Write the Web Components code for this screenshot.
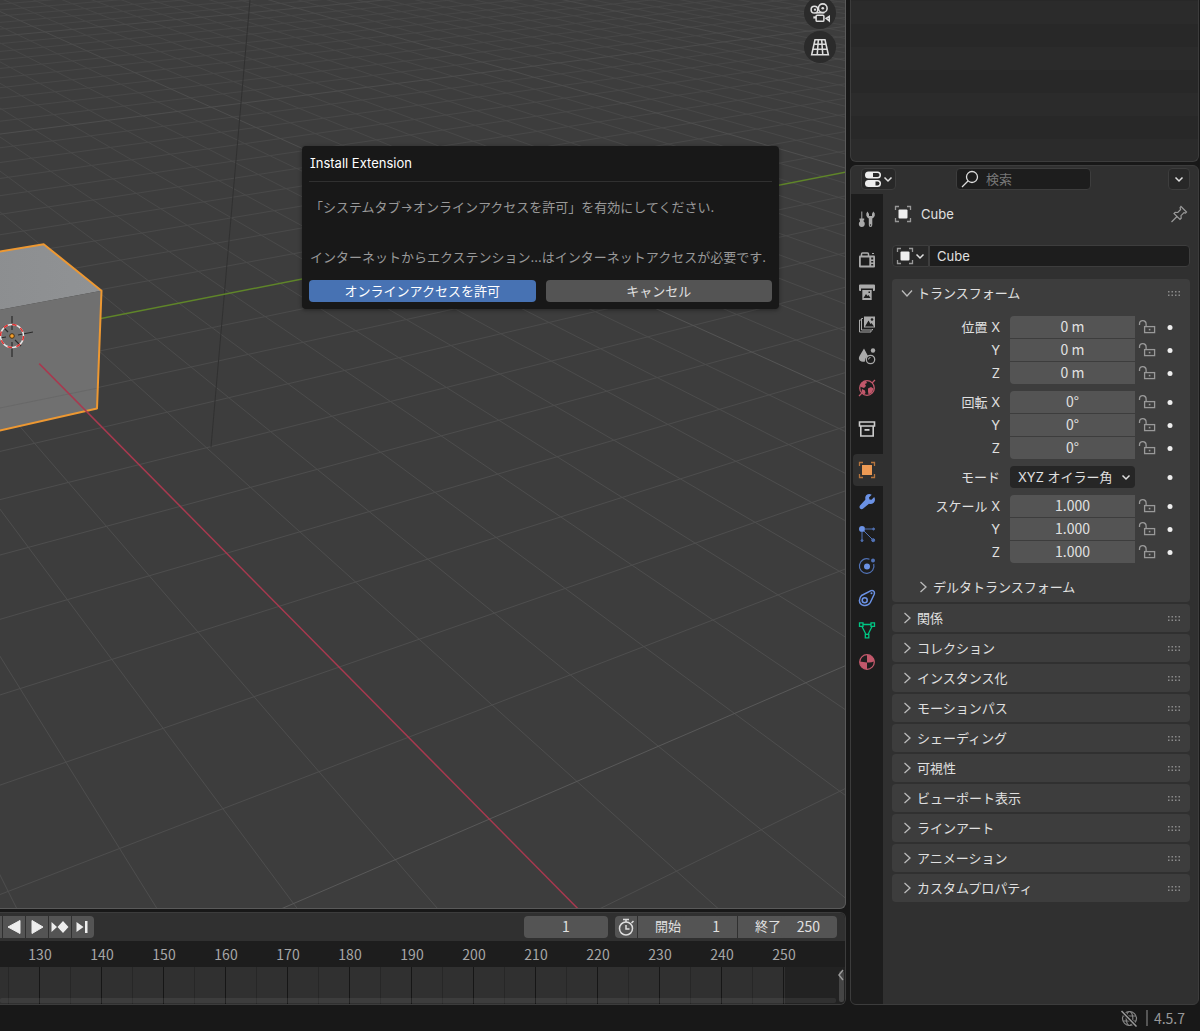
<!DOCTYPE html>
<html lang="ja">
<head>
<meta charset="utf-8">
<title>Install Extension</title>
<style>
    html, body {
        height: 100%;
        margin: 0;
    }
    body {
        --bg: #181818;
        --panel: #303030;
        --box: #3d3d3d;
        --field: #545454;
        --dark: #1d1d1d;
        --text: #e0e0e0;
        --digits: 14px/20px "Noto Sans CJK JP", sans-serif;
        background: var(--bg);
        color: var(--text);
        font: 13px/20px Inter, "Noto Sans CJK JP", sans-serif;
        font-feature-settings: "cv08";
        overflow: hidden;
    }
</style>
</head>
<body>
<bl-app></bl-app>

<script>
const ICONS = {
    down: '<path d="M5.5 7.5 9 11l3.5-3.5" fill="none" stroke="currentColor" stroke-width="1.5"/>',
    open: '<path d="M4 6.5 9 12l5-5.5" fill="none" stroke="currentColor" stroke-width="1.3"/>',
    closed: '<path d="M6.5 4 12 9l-5.5 5" fill="none" stroke="currentColor" stroke-width="1.3"/>',
    left: '<path d="M11 4 7 9l4 5" fill="none" stroke="currentColor" stroke-width="1.5"/>',
    grip: '<path d="M3 7h1.5v1.5H3zM6.5 7H8v1.5H6.5zM10 7h1.5v1.5H10zM13.5 7H15v1.5h-1.5zM3 10.5h1.5V12H3zM6.5 10.5H8V12H6.5zM10 10.5h1.5V12H10zM13.5 10.5H15V12h-1.5z" fill="#8a8a8a"/>',
    dot: '<circle cx="9" cy="9.5" r="2.5" fill="#eee"/>',
    lock: '<g fill="none" stroke="#999" stroke-width="1.3"><path d="M1.5 7V6a3.3 3.3 0 0 1 6.6 0v3"/><rect x="6.6" y="8.6" width="10" height="6"/><path d="M11.6 10.8v1.6" stroke-width="1.6"/></g>',
    object: '<rect x="4.5" y="4.5" width="9" height="9" rx="1" fill="#eee"/><path d="M5 1.5H1.5V5M13 1.5h3.5V5M5 16.5H1.5V13M13 16.5h3.5V13" fill="none" stroke="#999" stroke-width="1.3"/>',
    objectTab: '<rect x="4" y="4" width="10" height="10" fill="#ed9a54"/><path d="M5 1.5H1.5V5M13 1.5h3.5V5M5 16.5H1.5V13M13 16.5h3.5V13" fill="none" stroke="#b5743d" stroke-width="1.3"/>',
    pin: '<path d="m11 1.5 5.5 5.5-1 1-1.5-.3-3 3 .2 2.5-1.2 1.2L4 8.5l1.2-1.2 2.6.2 2.8-3-.5-1.8zM7 11.5 1.5 17" fill="none" stroke="#999" stroke-width="1.2"/>',
    search: '<g fill="none" stroke="#ddd" stroke-width="1.3"><circle cx="11" cy="7" r="5.5"/><path d="m7 11-6 6"/></g>',
    toggles: '<rect x="1" y="1.5" width="16" height="7" rx="3.5" fill="#eee"/><path d="M9 3h4.5a2 2 0 0 1 0 4H9z" fill="#282828"/><rect x="1" y="10" width="16" height="7" rx="3.5" fill="#eee"/><path d="M11.5 11.5h2a2 2 0 0 1 0 4h-2z" fill="#282828"/>',
    tool: '<g fill="currentColor"><path d="M3.3 1.5h1v7h-1zM1.5 8.5h4.7v1.7H5.6v1.2q1.4.8 1.2 2.6-.3 3-3 3t-3-3q0-1.8 1.2-2.6v-1.2h-.5z"/><path d="M9.5 1.5 11 4v2h3V4l1.2-2.5q2.2 1.5 1.6 4-.5 2-2.5 3V15q0 2-1.8 2T10.8 15V8.5q-2-1-2.5-3-.4-2.5 1.2-4z"/></g><circle cx="12.5" cy="15" r=".7" fill="#1d1d1d"/>',
    render: '<path d="M3.5 5V3q0-1 1-1h5q1 0 1 1v2" fill="none" stroke="currentColor" stroke-width="1.5"/><path d="M2 4.5h14q1 0 1 1v10q0 1-1 1H2q-1 0-1-1v-10q0-1 1-1z" fill="currentColor"/><rect x="2.8" y="6.5" width="8.5" height="8" fill="#1d1d1d"/><path d="M13.2 6.5h2v2h-2zM13.2 10h2v1.5h-2zM13.2 13h2v1.5h-2z" fill="#1d1d1d"/><path d="M14 2h2v1h-2z" fill="currentColor"/>',
    output: '<path d="M2 1.5h14q1 0 1 1V7q0 1-1 1h-1V5.5H3V8H2Q1 8 1 7V2.500q0-1 1-1z" fill="currentColor"/><path d="M4.3 7h9.4v10H4.3z" fill="currentColor"/><path d="m5.5 15 2.5-4 1.5 2 1-1 2 3zM10.5 8.5H12V10h-1.5z" fill="#1d1d1d"/>',
    viewlayer: '<path d="M3 5H1.5v12H13v-1.5M5 3.5H3.5V15h11v-1" fill="none" stroke="currentColor"/><rect x="6" y="1.5" width="11" height="11" fill="currentColor"/><path d="m7 11.5 3.5-6 2 3.5 1-1 2.5 3.5z" fill="#1d1d1d"/><circle cx="14" cy="4.5" r="1.3" fill="#1d1d1d"/>',
    scene: '<path d="M6 1.5 10 9q-3.5 2-3 5.5-3 1-5-.8T1.5 9z" fill="currentColor"/><circle cx="15" cy="3.5" r="2.2" fill="currentColor"/><circle cx="12.5" cy="12.5" r="4.2" fill="none" stroke="currentColor" stroke-width="1.3"/><path d="M10.5 12.5q0-2 2-2" fill="none" stroke="currentColor"/>',
    world: '<g stroke="#c2586b" fill="none" stroke-width="1.3"><circle cx="9" cy="9" r="7.3"/><path d="m14 4 3-3M4 14l-3 3"/></g><path d="M3 4q3-2.5 5-2l1 2-2 1 1 2-2 2-3-1-1-1zM10 9.5l3-1.5 2.5 1.5-1.5 4-3.5 2-.5-3zM4 10l3 1.5.5 2.5L6 15.5 3.5 13z" fill="#c2586b"/>',
    collection: '<path d="M1.5 2h15v4h-15zM2.8 6v10h12.4V6" fill="none" stroke="#ccc" stroke-width="1.6"/><path d="M6.5 9h5v1.8h-5z" fill="#ccc"/>',
    modifier: '<path d="M15.7 4.2 13 7l-2-.3-.5-2L13.200 2q-3-1.5-5.5.6Q6 4.500 6.800 7l-5.3 5.7q-1.2 1.5 0 3 1.5 1.5 3.2.2L10.5 11q2.5.8 4.7-1 2.3-2.5.5-5.8z" fill="#6b92e5" transform="translate(.5 -.3)"/>',
    particles: '<circle cx="4" cy="4" r="3" fill="#6b92e5"/><g stroke="#5172b5" fill="#5172b5"><path d="M6 4h8M4 6v8M6 6l8 8"/><circle cx="15.5" cy="4" r="1"/><circle cx="4" cy="15.5" r="1"/><circle cx="15.2" cy="15.2" r="1.5"/></g>',
    physics: '<circle cx="9" cy="9.5" r="3" fill="#6b92e5"/><circle cx="15" cy="3.5" r="2" fill="#5172b5"/><path d="M11.5 2.3A7.3 7.3 0 1 0 15.7 7" fill="none" stroke="#5172b5" stroke-width="1.2"/>',
    constraint: '<g fill="none" stroke="#6b92e5" stroke-width="1.5"><path d="M3.5 6.5 13 1.6q2.3-.7 3.2 1.2.5 1.2-.1 2.7l-3.8 8q-2 3.5-6.3 3-4.5-1-4.6-5 .2-3.2 2.1-5z"/><circle cx="6.7" cy="11.3" r="2.5"/></g><circle cx="13.5" cy="4.2" r="1" fill="#6b92e5"/>',
    mesh: '<path d="M4 5.5 8 13.5M14 5.5l-4 8M5 3.5h8M1.5 1.8H5v3.5H1.5zM13 1.8h3.5v3.5H13zM7.3 13.3h3.500v3.5H7.3z" fill="none" stroke="#00c684" stroke-width="1.3"/>',
    material: '<circle cx="9" cy="9" r="7.3" fill="#1d1d1d" stroke="#c2586b" stroke-width="1.3"/><path d="M9 1.7a7.3 7.3 0 0 1 7.3 6.6Q13 10 9 9.5zM9 9.5l-7.3-1A7.3 7.3 0 0 0 9 16.3z" fill="#c2586b"/>',
    camera: '<g fill="none" stroke="#ddd" stroke-width="1.4"><circle cx="4" cy="6" r="3"/><circle cx="11.5" cy="4.7" r="3.9"/><path d="M5 8.8h8"/><rect x="5.5" y="11" width="7" height="5.5" rx="1"/><path d="m14.5 13.8 2.8-1.8v4z"/></g><g fill="#ddd"><circle cx="4.5" cy="6" r="1"/><circle cx="11.5" cy="4.7" r="1.2"/><path d="M3 12h2.5v2H3z"/></g>',
    grid: '<path d="M4.5 2.5h9l3 13.5h-15zM3.7 6.5h10.6M2.8 11h12.4M7.5 2.5 6.5 16M10.5 2.5l1 13.5" fill="none" stroke="#ddd" stroke-width="1.4"/>',
    prev: '<path d="M15 2.5v13L3 9z" fill="#eee" stroke="#eee" stroke-linejoin="round"/>',
    play: '<path d="M4 2.5v13L15 9z" fill="#eee" stroke="#eee" stroke-linejoin="round"/>',
    nextkey: '<path d="M.5 4v10L6 9zM12 3l5.5 6-5.5 6-5.5-6z" fill="#eee"/>',
    end: '<path d="M2.5 4v10l7-5zM11 3h2.5v12H11z" fill="#eee"/>',
    stopwatch: '<g fill="none" stroke="#ddd" stroke-width="1.5"><circle cx="9" cy="10.5" r="6.5"/><path d="M6 1.5h6M9 1.5V4M14.500 5l2-2M9 7v4h3.5"/></g>',
    globe: '<g fill="none" stroke="#858585" stroke-width="1.2"><circle cx="9.5" cy="9.5" r="7"/><ellipse cx="9.5" cy="9.5" rx="3.3" ry="7"/><path d="M3 7h13M3 12h13"/></g><path d="m1.5 2 15 15.5" stroke="#181818" stroke-width="3.5"/><path d="m1.5 2 15 15.5" stroke="#999" stroke-width="1.5"/>'
};

// One shadow root per element, filled from its render() markup
class BlElement extends HTMLElement {
    constructor() {
        super();
        this.attachShadow({ mode: 'open' });
    }

    connectedCallback() {
        this.shadowRoot.innerHTML = this.render();
    }
}

class BlIcon extends BlElement {
    render() {
        return `
            <style>
            :host { display: inline-flex; flex: none; width: 18px; height: 18px; }
            svg { display: block; width: 100%; height: 100%; }
            </style>
            <svg viewBox="0 0 18 18" aria-hidden="true">${ICONS[this.getAttribute('name')]}</svg>
        `;
    }
}
customElements.define('bl-icon', BlIcon);

class BlScene extends BlElement {
    render() {
        return `
            <style>
            :host { display: block; }
            svg { display: block; width: 100%; height: 100%; }
            .minor { stroke: url(#fade); }
            .major { stroke: url(#fadeMajor); }
            </style>
            <svg role="img" aria-label="3D viewport">
                <defs>
                    <linearGradient id="fade" gradientUnits="userSpaceOnUse" x1="0" y1="0" x2="0" y2="500">
                        <stop offset="0" stop-color="#464646"/>
                        <stop offset="1" stop-color="#4d4d4d"/>
                    </linearGradient>
                    <linearGradient id="fadeMajor" gradientUnits="userSpaceOnUse" x1="0" y1="0" x2="0" y2="500">
                        <stop offset="0" stop-color="#4a4a4a"/>
                        <stop offset="1" stop-color="#585858"/>
                    </linearGradient>
                    <linearGradient id="top" x1="0" y1="0" x2="1" y2="0">
                        <stop offset="0" stop-color="#8a8c8e"/>
                        <stop offset="1" stop-color="#909294"/>
                    </linearGradient>
                </defs>
                ${this.drawGrid()}
                ${this.drawCube()}
                ${this.drawCursor()}
            </svg>
        `;
    }

    // World point to screen, orbit camera looking at the origin
    project([x, y, z]) {
        const c = 0.4033, s = 0.915, k = 0.446, e = 0.895;
        const depth = 17.98 - (s * e * x - c * e * y + k * z);
        const right = c * x + s * y;
        const up = -s * k * x + c * k * y + e * z;
        return [12 + 1159 * right / depth, 336 - 1159 * up / depth].map(v => Math.round(v * 10) / 10);
    }

    segment(a, b, attrs) {
        const [x1, y1] = this.project(a);
        const [x2, y2] = this.project(b);
        return `<line x1="${x1}" y1="${y1}" x2="${x2}" y2="${y2}" ${attrs}/>`;
    }

    drawGrid() {
        let minor = '', major = '';
        for (let i = -70; i <= 90; i++) {
            if (i === 0) continue;
            const cls = i % 10 ? 'class="minor"' : 'class="major"';
            let out = '';
            if (i < 18) out += this.segment([i, Math.max(-20, (i - 17) * 2), 0], [i, 120, 0], cls);
            if (i > -25) out += this.segment([-100, i, 0], [Math.min(16, 16 + i / 4), i, 0], cls);
            if (i % 10) minor += out;
            else major += out;
        }
        return minor + major
            + '<path d="M250 0 211 447" stroke="#313131"/>'
            + this.segment([0, 0, 0], [0, 120, 0], 'stroke="#5f8529" stroke-width="1.5"');
    }

    drawCube() {
        const pts = list => list.map(p => this.project(p).join(',')).join(' ');
        return `
            <polygon points="${pts([[1, 1, 1], [-1, 1, 1], [-1, -1, 1], [1, -1, 1]])}" fill="url(#top)"/>
            <polygon points="${pts([[1, 1, 1], [1, -1, 1], [1, -1, -1], [1, 1, -1]])}" fill="#707070"/>
            <path d="M0 408 98 388" stroke="#686868"/>
            <polygon points="${pts([[1, 1, 1], [-1, 1, 1], [-1, -1, 1], [1, -1, 1], [1, -1, -1], [1, 1, -1]])}"
                fill="none" stroke="#ed9832" stroke-width="2" stroke-linejoin="round"/>
            ${this.segment([1, 0, 0], [14, 0, 0], 'stroke="#a8394f" stroke-width="1.5"')}
        `;
    }

    drawCursor() {
        return `
            <g fill="none">
                <path d="M12 316v14M12 342v15M18 335l15-3M0 338l6-1M3 327l5 5M15 340l6 6" stroke="#2b2b2b" stroke-width="1.2"/>
                <circle cx="12" cy="336" r="11.5" stroke="#e8e8e8" stroke-width="1.5"/>
                <circle cx="12" cy="336" r="11.5" stroke="#e03030" stroke-width="1.5" stroke-dasharray="4.5 4.5"/>
                <circle cx="12" cy="336" r="2.3" fill="#f5a02c" stroke="#4a3010"/>
            </g>
        `;
    }
}
customElements.define('bl-scene', BlScene);

class BlDialog extends BlElement {
    render() {
        return `
            <style>
            :host {
                display: block; box-sizing: border-box; width: 477px; padding: 7px;
                background: #181818; border-radius: 4px; box-shadow: 0 1px 4px #0006;
            }
            h1 {
                margin: 0 0 15px; padding: 0 1px 8px; border-bottom: 1px solid #303030;
                color: #fff; font-size: 13px; font-weight: 400; line-height: 20px;
            }
            .actions { display: flex; gap: 10px; margin-top: 13px; }
            </style>
            <div role="dialog" aria-labelledby="title">
                <h1 id="title">${this.getAttribute('heading')}</h1>
                <slot></slot>
                <div class="actions"><slot name="action"></slot></div>
            </div>
        `;
    }
}
customElements.define('bl-dialog', BlDialog);

class BlButton extends BlElement {
    render() {
        return `
            <style>
            :host { display: block; flex: 1; }
            button {
                display: block; width: 100%; height: 22px; padding: 0; border: 0; border-radius: 4px;
                background: var(--field); color: var(--text); font: inherit; line-height: 20px;
            }
            :host([primary]) button { background: #4772b3; color: #fff; }
            </style>
            <button type="button"><slot></slot></button>
        `;
    }
}
customElements.define('bl-button', BlButton);

class BlViewport extends BlElement {
    render() {
        return `
            <style>
            :host {
                display: block; position: relative; overflow: hidden; background: #3d3d3d;
                border: solid #5a5a5a; border-width: 0 1px 1px 0; border-radius: 0 0 6px 0;
            }
            bl-scene { width: 100%; height: 100%; }
            .gizmos { position: absolute; right: 9px; top: -3px; display: flex; flex-direction: column; gap: 2px; }
            .gizmos button {
                display: flex; align-items: center; justify-content: center;
                width: 32px; height: 32px; padding: 0; border: 0; border-radius: 50%; background: #2b2b2b;
            }
            .gizmos bl-icon { width: 20px; height: 20px; }
            bl-dialog { position: absolute; left: 302px; top: 146px; }
            p { margin: 0 1px; color: #999; line-height: 20px; }
            p + p { margin-top: 30px; }
            </style>
            <bl-scene></bl-scene>
            <div class="gizmos">
                <button type="button" aria-label="Camera"><bl-icon name="camera"></bl-icon></button>
                <button type="button" aria-label="Perspective"><bl-icon name="grid"></bl-icon></button>
            </div>
            <bl-dialog heading="Install Extension">
                <p>「システムタブ→オンラインアクセスを許可」を有効にしてください.</p>
                <p>インターネットからエクステンション…はインターネットアクセスが必要です.</p>
                <bl-button slot="action" primary>オンラインアクセスを許可</bl-button>
                <bl-button slot="action">キャンセル</bl-button>
            </bl-dialog>
        `;
    }
}
customElements.define('bl-viewport', BlViewport);

class BlTimeline extends BlElement {
    render() {
        const frames = [];
        for (let f = 130; f <= 250; f += 10) frames.push(`<span>${f}</span>`);
        return `
            <style>
            :host {
                display: block; overflow: hidden; background: #1d1d1d;
                border: solid #3c3c3c; border-width: 1px 1px 1px 0; border-radius: 0 6px 6px 0;
            }
            .bar { display: flex; align-items: center; height: 28px; padding-right: 8px; background: var(--panel); }
            .group { display: flex; gap: 1px; border-radius: 4px; overflow: hidden; }
            .play { margin-left: -20px; }
            button {
                display: flex; align-items: center; justify-content: center;
                width: 22px; height: 22px; padding: 0; border: 0; background: var(--field);
            }
            .current { width: 84px; margin: 0 7px 0 auto; }
            .group label { display: flex; box-sizing: border-box; width: 99px; padding: 0 17px 0 17px; background: var(--field); }
            input {
                box-sizing: border-box; width: 100%; min-width: 0; height: 22px; padding: 0 0 2px; border: 0; border-radius: 4px;
                background: var(--field); color: var(--text); font: var(--digits); text-align: center;
            }
            .group label span { flex: none; line-height: 20px; }
            .group label input { text-align: right; }
            .ruler { display: flex; height: 26px; padding-left: 9px; color: #a6a6a6; font: var(--digits); line-height: 26px; }
            .ruler span { flex: 0 0 62px; text-align: center; }
            .tracks { position: relative; height: 37px; background: #222; }
            .range {
                width: 785px; height: 100%;
                background:
                    repeating-linear-gradient(90deg, #161616 0 1px, transparent 1px 62px) -23px 0,
                    repeating-linear-gradient(90deg, #272727 0 1px, transparent 1px 62px) 8px 0,
                    #303030;
                background-size: 1240px 100%;
            }
            .hbar { position: absolute; left: 0; right: 9px; bottom: 1px; height: 5px; border-radius: 2px; background: #fff1; }
            .vbar { position: absolute; right: 1px; top: 4px; bottom: 2px; width: 5px; border-radius: 2px; background: #444; }
            .more { position: absolute; right: -5px; top: -1px; width: 18px; height: 18px; color: #999; background: none; }
            </style>
            <div class="bar">
                <div class="group play">
                    <button type="button" aria-label="Previous key"></button>
                    <button type="button" aria-label="Play reverse"><bl-icon name="prev"></bl-icon></button>
                    <button type="button" aria-label="Play"><bl-icon name="play"></bl-icon></button>
                    <button type="button" aria-label="Next key"><bl-icon name="nextkey"></bl-icon></button>
                    <button type="button" aria-label="Jump to end"><bl-icon name="end"></bl-icon></button>
                </div>
                <input class="current" aria-label="Current frame" value="1">
                <div class="group">
                    <button type="button" aria-label="Preview range"><bl-icon name="stopwatch"></bl-icon></button>
                    <label><span>開始</span><input value="1"></label>
                    <label><span>終了</span><input value="250"></label>
                </div>
            </div>
            <div class="ruler">${frames.join('')}</div>
            <div class="tracks">
                <div class="range"></div>
                <div class="hbar"></div>
                <div class="vbar"></div>
                <button class="more" type="button" aria-label="Sidebar"><bl-icon name="left"></bl-icon></button>
            </div>
        `;
    }
}
customElements.define('bl-timeline', BlTimeline);

class BlOutliner extends BlElement {
    render() {
        return `
            <style>
            :host {
                display: block; box-sizing: border-box; height: 162px;
                border: solid #3c3c3c; border-width: 0 1px 1px; border-radius: 0 0 6px 6px;
                background: linear-gradient(#282828 50%, #2b2b2b 50%) 0 24px / 100% 46px;
            }
            </style>
        `;
    }
}
customElements.define('bl-outliner', BlOutliner);

class BlTabs extends BlElement {
    render() {
        const groups = [
            ['tool'],
            ['render', 'output', 'viewlayer', 'scene', 'world'],
            ['collection'],
            ['objectTab', 'modifier', 'particles', 'physics', 'constraint', 'mesh', 'material']
        ];
        const tab = name => `
            <button type="button" role="tab" aria-label="${name}" aria-selected="${name === 'objectTab'}">
                <bl-icon name="${name}"></bl-icon>
            </button>`;
        return `
            <style>
            :host { display: block; box-sizing: border-box; width: 32px; padding: 9px 0 0 2px; background: var(--dark); color: #aaa; }
            div { display: flex; flex-direction: column; gap: 9px; }
            div div { gap: 0; }
            button {
                display: flex; align-items: center; justify-content: center;
                width: 100%; height: 32px; padding: 0 2px 0 0; border: 0; border-radius: 4px 0 0 4px;
                background: none; color: inherit;
            }
            [aria-selected=true] { background: var(--panel); }
            </style>
            <div role="tablist">${groups.map(g => `<div>${g.map(tab).join('')}</div>`).join('')}</div>
        `;
    }
}
customElements.define('bl-tabs', BlTabs);

class BlPanel extends BlElement {
    render() {
        const open = this.hasAttribute('open');
        return `
            <style>
            :host { display: block; border-radius: 4px; background: var(--box); }
            :host([sub]) { background: none; }
            button {
                display: flex; align-items: center; gap: 1px;
                width: 100%; height: 28px; padding: 0 7px 0 6px; border: 0;
                background: none; color: inherit; font: inherit; text-align: left;
            }
            bl-icon { color: #bbb; }
            .title { flex: 1; }
            :host([sub]) button { height: 24px; padding-left: 22px; }
            :host([sub]) .grip { display: none; }
            </style>
            <button type="button" aria-expanded="${open}">
                <bl-icon name="${open ? 'open' : 'closed'}"></bl-icon>
                <span class="title">${this.getAttribute('heading')}</span>
                <bl-icon class="grip" name="grip"></bl-icon>
            </button>
            <slot></slot>
        `;
    }
}
customElements.define('bl-panel', BlPanel);

class BlVector extends BlElement {
    render() {
        const value = this.getAttribute('value');
        const row = (label, i) => `
            <label for="v${i}">${label}</label>
            <input id="v${i}" value="${value}">
            <bl-icon name="lock"></bl-icon>
            <bl-icon name="dot"></bl-icon>`;
        return `
            <style>
            :host {
                display: grid; grid-template-columns: 108fr 10px 125fr 24px 22px; row-gap: 1px;
                align-items: center; padding-right: 9px;
            }
            label { text-align: right; line-height: 22px; }
            input {
                grid-column: 3; box-sizing: border-box; width: 100%; min-width: 0; height: 22px; padding: 0 0 2px; border: 0;
                background: var(--field); color: var(--text); font: var(--digits); text-align: center;
            }
            #v0 { border-radius: 4px 0 0 0; }
            #v2 { border-radius: 0 0 0 4px; }
            bl-icon { justify-self: center; }
            </style>
            ${[this.getAttribute('label') + ' X', 'Y', 'Z'].map(row).join('')}
        `;
    }
}
customElements.define('bl-vector', BlVector);

class BlMode extends BlElement {
    render() {
        return `
            <style>
            :host {
                display: grid; grid-template-columns: 108fr 10px 125fr 24px 22px;
                align-items: center; padding-right: 9px;
            }
            label { text-align: right; line-height: 22px; }
            .select { display: grid; grid-column: 3; align-items: center; }
            select {
                grid-area: 1 / 1; appearance: none; width: 100%; height: 22px; padding: 0 20px 0 8px; border: 0; border-radius: 4px;
                background: #262626; color: var(--text); font: inherit;
            }
            .select bl-icon { grid-area: 1 / 1; justify-self: end; pointer-events: none; }
            .dot { grid-column: 5; justify-self: center; }
            </style>
            <label for="mode">モード</label>
            <div class="select">
                <select id="mode"><option>XYZ オイラー角</option></select>
                <bl-icon name="down"></bl-icon>
            </div>
            <bl-icon class="dot" name="dot"></bl-icon>
        `;
    }
}
customElements.define('bl-mode', BlMode);

class BlProperties extends BlElement {
    render() {
        const closed = ['関係', 'コレクション', 'インスタンス化', 'モーションパス', 'シェーディング', '可視性',
            'ビューポート表示', 'ラインアート', 'アニメーション', 'カスタムプロパティ'];
        return `
            <style>
            :host {
                display: flex; flex-direction: column; overflow: hidden; background: var(--panel);
                border: 1px solid #3c3c3c; border-radius: 6px;
            }
            header { display: flex; align-items: center; box-sizing: border-box; height: 28px; padding: 0 8px 2px 10px; }
            button { display: flex; align-items: center; justify-content: center; padding: 0; border: 0; background: none; color: inherit; }
            header button, .id button {
                box-sizing: border-box; height: 22px; border: 1px solid #3d3d3d; border-radius: 4px; background: #282828;
            }
            .editor { width: 35px; }
            .editor .chev, .id .chev { margin: 0 -3px; }
            .options { width: 22px; margin-left: auto; }
            .search {
                display: flex; align-items: center; gap: 7px; box-sizing: border-box;
                width: 135px; height: 22px; margin-left: 60px; padding: 0 4px;
                border: 1px solid #3d3d3d; border-radius: 4px; background: var(--dark);
            }
            input { min-width: 0; flex: 1; padding: 0; border: 0; background: none; color: var(--text); font: inherit; }
            input::placeholder { color: #777; opacity: 1; }
            .body { display: flex; flex: 1; }
            main { flex: 1; padding: 0 8px 0 9px; }
            .crumb { display: flex; align-items: center; gap: 9px; height: 40px; padding: 0 2px; }
            .crumb button { margin-left: auto; }
            .id { display: flex; margin: 11px 0 12px; }
            .id button { width: 37px; border-radius: 4px 0 0 4px; }
            .id input {
                box-sizing: border-box; height: 22px; padding: 0 7px;
                border: 1px solid #3d3d3d; border-radius: 0 4px 4px 0; background: var(--dark);
            }
            .panels { display: flex; flex-direction: column; gap: 2px; }
            .transform { display: flex; flex-direction: column; gap: 7px; padding: 9px 0 3px; }
            .transform bl-panel { margin-top: 5px; }
            </style>
            <header>
                <button class="editor" type="button" aria-label="Editor type">
                    <bl-icon name="toggles"></bl-icon><bl-icon class="chev" name="down"></bl-icon>
                </button>
                <label class="search"><bl-icon name="search"></bl-icon><input type="search" placeholder="検索" aria-label="検索"></label>
                <button class="options" type="button" aria-label="Options"><bl-icon name="down"></bl-icon></button>
            </header>
            <div class="body">
                <bl-tabs></bl-tabs>
                <main>
                    <div class="crumb">
                        <bl-icon name="object"></bl-icon><span>Cube</span>
                        <button type="button" aria-label="Pin"><bl-icon name="pin"></bl-icon></button>
                    </div>
                    <div class="id">
                        <button type="button" aria-label="Browse object">
                            <bl-icon name="object"></bl-icon><bl-icon class="chev" name="down"></bl-icon>
                        </button>
                        <input aria-label="Name" value="Cube">
                    </div>
                    <div class="panels">
                        <bl-panel heading="トランスフォーム" open>
                            <div class="transform">
                                <bl-vector label="位置" value="0 m"></bl-vector>
                                <bl-vector label="回転" value="0°"></bl-vector>
                                <bl-mode></bl-mode>
                                <bl-vector label="スケール" value="1.000"></bl-vector>
                                <bl-panel heading="デルタトランスフォーム" sub></bl-panel>
                            </div>
                        </bl-panel>
                        ${closed.map(t => `<bl-panel heading="${t}"></bl-panel>`).join('')}
                    </div>
                </main>
            </div>
        `;
    }
}
customElements.define('bl-properties', BlProperties);

class BlStatus extends BlElement {
    render() {
        return `
            <style>
            :host { display: flex; align-items: center; justify-content: flex-end; gap: 8px; height: 26px; padding-right: 15px; color: #999; }
            span { padding-left: 6px; border-left: 2px solid #555; font: var(--digits); line-height: 16px; }
            </style>
            <bl-icon name="globe"></bl-icon>
            <span>4.5.7</span>
        `;
    }
}
customElements.define('bl-status', BlStatus);

class BlApp extends BlElement {
    render() {
        return `
            <style>
            :host { display: flex; flex-direction: column; height: 100%; }
            .areas { display: grid; flex: 1; grid-template-columns: 1fr 349px; gap: 4px; min-height: 0; padding-right: 1px; }
            .col { display: flex; flex-direction: column; gap: 3px; min-width: 0; min-height: 0; }
            bl-viewport, bl-properties { flex: 1; min-height: 0; }
            </style>
            <div class="areas">
                <div class="col">
                    <bl-viewport></bl-viewport>
                    <bl-timeline></bl-timeline>
                </div>
                <div class="col">
                    <bl-outliner></bl-outliner>
                    <bl-properties></bl-properties>
                </div>
            </div>
            <bl-status></bl-status>
        `;
    }
}
customElements.define('bl-app', BlApp);
</script>
</body>
</html>
